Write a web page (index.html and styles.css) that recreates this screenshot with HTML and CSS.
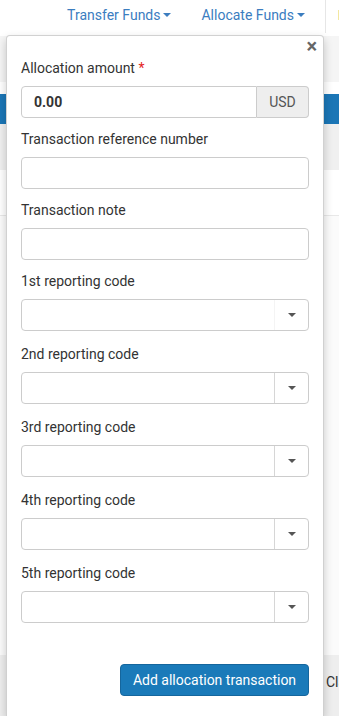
FILE: index.html
```html
<!DOCTYPE html>
<html lang="en">

<head>
    <meta charset="UTF-8">
    <meta name="viewport" content="width=device-width, initial-scale=1.0">
    <title>Allocate Funds</title>
    <link rel="stylesheet" href="styles.css">
</head>

<body>
    <div class="page">
        <div class="topbar">
            <a class="nav-link">Transfer Funds <span class="caret"></span></a>
            <a class="nav-link">Allocate Funds <span class="caret"></span></a>
            <div class="topbar-side"><span class="flag"></span></div>
        </div>
        <div class="band-light"></div>
        <div class="band-gap"></div>
        <div class="band-blue"></div>
        <div class="band-gray"></div>
        <div class="band-row"></div>
        <div class="page-body"></div>
        <div class="page-footer"><span class="footer-text">Cla</span></div>
    </div>

    <div class="popover">
        <span class="close">&times;</span>

        <div class="form-group">
            <label class="form-label">Allocation amount <span class="required">*</span></label>
            <div class="input-group">
                <input class="form-input amount" type="text" value="0.00">
                <span class="addon">USD</span>
            </div>
        </div>

        <div class="form-group">
            <label class="form-label">Transaction reference number</label>
            <input class="form-input" type="text">
        </div>

        <div class="form-group">
            <label class="form-label">Transaction note</label>
            <input class="form-input" type="text">
        </div>

        <div class="form-group select-group">
            <label class="form-label">1st reporting code</label>
            <div class="select first">
                <span class="select-value"></span>
                <span class="select-toggle"><span class="caret dark"></span></span>
            </div>
        </div>

        <div class="form-group select-group">
            <label class="form-label">2nd reporting code</label>
            <div class="select">
                <span class="select-value"></span>
                <span class="select-toggle"><span class="caret dark"></span></span>
            </div>
        </div>

        <div class="form-group select-group">
            <label class="form-label">3rd reporting code</label>
            <div class="select">
                <span class="select-value"></span>
                <span class="select-toggle"><span class="caret dark"></span></span>
            </div>
        </div>

        <div class="form-group select-group">
            <label class="form-label">4th reporting code</label>
            <div class="select">
                <span class="select-value"></span>
                <span class="select-toggle"><span class="caret dark"></span></span>
            </div>
        </div>

        <div class="form-group select-group">
            <label class="form-label">5th reporting code</label>
            <div class="select">
                <span class="select-value"></span>
                <span class="select-toggle"><span class="caret dark"></span></span>
            </div>
        </div>

        <div class="actions">
            <button class="btn-primary" type="button">Add allocation transaction</button>
        </div>
    </div>
</body>

</html>
```

FILE: styles.css
```css
body {
    font-family: Roboto, "Liberation Sans", sans-serif;
    font-size: 14px;
    color: #333;
    margin: 0;
    padding: 0;
    width: 339px;
    height: 716px;
    overflow: hidden;
    background-color: #fff;
}

.page {
    display: flex;
    flex-direction: column;
    height: 716px;
}

.topbar {
    height: 36px;
    box-sizing: border-box;
    padding-top: 6px;
    display: flex;
    align-items: flex-start;
    justify-content: flex-end;
    gap: 30px;
}

.nav-link {
    color: #3b7dbf;
    font-size: 14px;
    line-height: 18px;
    display: flex;
    align-items: center;
    gap: 3px;
}

.topbar-side {
    width: 13px;
    height: 33px;
    margin-top: -6px;
    border-left: 1px solid #e6e6e6;
    margin-left: -10px;
    position: relative;
}

.flag {
    position: absolute;
    right: 0;
    top: 10px;
    width: 1px;
    height: 10px;
    background-color: #f3e7a0;
}

.caret {
    display: inline-block;
    width: 0;
    height: 0;
    border-left: 4px solid transparent;
    border-right: 4px solid transparent;
    border-top: 4px solid #3b7dbf;
}

.caret.dark {
    border-top-color: #555;
}

.band-light {
    height: 46px;
    background-color: #f5f5f5;
}

.band-gap {
    height: 12px;
}

.band-blue {
    height: 30px;
    background-color: #1b76b6;
}

.band-gray {
    height: 46px;
    background-color: #f0f0f0;
}

.band-row {
    height: 45px;
    border-bottom: 1px solid #e8e8e8;
}

.page-body {
    flex: 1;
    background-color: #fbfbfb;
}

.page-footer {
    height: 61px;
    background-color: #eeeeee;
    display: flex;
    justify-content: flex-end;
    padding-top: 19px;
    box-sizing: border-box;
}

.footer-text {
    width: 13px;
    font-size: 14px;
    overflow: hidden;
    white-space: nowrap;
    color: #333;
}

.popover {
    position: absolute;
    left: 6px;
    top: 35px;
    bottom: 0;
    width: 288px;
    padding: 22px 14px 0;
    background-color: #fff;
    border: 1px solid rgba(0, 0, 0, 0.18);
    border-bottom: none;
    border-radius: 4px 4px 0 0;
    box-shadow: 0 4px 10px rgba(0, 0, 0, 0.2);
    overflow: hidden;
}

.close {
    position: absolute;
    top: 0;
    right: 6px;
    font-size: 20px;
    font-weight: bold;
    line-height: 20px;
    color: #666;
}

.form-group {
    margin-bottom: 11px;
}

.select-group {
    margin-bottom: 13px;
}

.form-label {
    display: block;
    line-height: 20px;
    margin-bottom: 8px;
    color: #333;
}

.required {
    color: #e32222;
}

.form-input {
    display: block;
    box-sizing: border-box;
    width: 100%;
    height: 32px;
    margin: 0;
    padding: 0 12px;
    border: 1px solid #ccc;
    border-radius: 4px;
    font-family: inherit;
    font-size: 14px;
    color: #333;
    background-color: #fff;
}

.input-group {
    display: flex;
    height: 32px;
}

.input-group .amount {
    flex: 1;
    font-weight: bold;
    border-radius: 4px 0 0 4px;
}

.addon {
    width: 52px;
    box-sizing: border-box;
    display: flex;
    align-items: center;
    justify-content: center;
    background-color: #eeeeee;
    border: 1px solid #ccc;
    border-left: none;
    border-radius: 0 4px 4px 0;
    color: #555;
}

.select {
    display: flex;
    box-sizing: border-box;
    height: 32px;
    border: 1px solid #ccc;
    border-radius: 4px;
}

.select-value {
    flex: 1;
}

.select-toggle {
    width: 33px;
    display: flex;
    align-items: center;
    justify-content: center;
    border-left: 1px solid #d6d6d6;
}

.select.first .select-toggle {
    border-left-color: #f4f4f4;
}

.actions {
    display: flex;
    justify-content: flex-end;
    margin-top: 41px;
}

.btn-primary {
    height: 32px;
    width: 189px;
    padding: 0;
    border: 1px solid #15669d;
    border-radius: 4px;
    background-color: #1a7ab9;
    color: #fff;
    font-family: inherit;
    font-size: 14px;
}
```
